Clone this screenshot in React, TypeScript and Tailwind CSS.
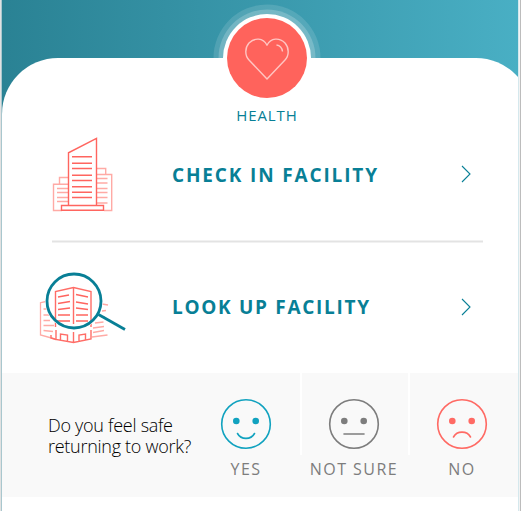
import type { ReactNode } from "react";

function HealthBadge() {
  return (
    <svg className="block h-[110px] w-[110px]" viewBox="-55 -55 110 110" fill="none">
      <circle r="53.500" fill="#fff" fillOpacity="0.13" />
      <circle r="48.500" fill="#fff" fillOpacity="0.2" />
      <circle r="44" fill="#fff" />
      <circle r="40" fill="#ff635c" />
      <path
        d="M0 21-18 2C-22.500-2.500-22-10.500-18-15-12.500-20.500-4-20.500 0-12.800 4-20.500 12.500-20.500 18-15 22-10.500 22.500-2.500 18 2Z"
        stroke="#ffc5c2"
        strokeWidth="1.4"
        strokeLinejoin="round"
      />
      <path d="M9.500-13C13-12.500 15-10 15.500-6.500" stroke="#ffc5c2" strokeWidth="1.4" />
    </svg>
  );
}

function BuildingIcon() {
  return (
    <svg className="block h-[100px] w-[100px]" viewBox="40 125 100 100" fill="none">
      <g stroke="#ffaaa5" strokeWidth="1.4">
        <path d="M68 184.300H53.500V210.500H62M59.500 184V177.500H68M97 174.500H111.700V210.500H104M97 168.500H105.700V174.500" />
        <path d="M57 188.500H68M57 192.500H68M57 197.500H68M57 201.500H68M97 178.500H107.500M97 183H107.500M97 188.500H107.500M97 192.500H107.500M97 197.500H107.500M97 203H107.500" />
      </g>
      <path d="M68.500 205V152.800L96.500 138.500V205M61.500 205.500H103.500V210.300H61.500Z" stroke="#ff655f" strokeWidth="1.4" />
      <path
        d="M72 156.700H92M72 163.300H92M72 168.500H92M72 175.300H92M72 180.500H92M72 186.700H92M72 192.300H92M72 197.500H92"
        stroke="#ff655f"
        strokeWidth="1.4"
      />
    </svg>
  );
}

function LookUpIcon() {
  return (
    <svg className="block h-[100px] w-[100px]" viewBox="30 260 100 100" fill="none">
      <g stroke="#ffaaa5" strokeWidth="1.3">
        <path d="M46 301.500 40.500 302.700V335L55 339M43.500 309H49M43.500 315H49M43.500 320.500H50M43.500 325.500H54M43.500 330.500 53 331.500M102 304 108 305M102 311 106 310.500M101 317H105M95 323 103.500 322M93 328 104 326.500M93 332.500 104 330.500M92 337 107.500 335" />
      </g>
      <path
        d="M55.500 327V291.500L73.500 287.500 91 291.500V327M73.500 287.500V324M56 330V339.500L73.500 342.500 91 339V330M73.500 332V342M60.500 340V334L67.500 335V341.500M79 341.500V335L85.500 334V339.500M51 335V338L56 339.500"
        stroke="#ff6d67"
        strokeWidth="1.4"
      />
      <path
        d="M58 297 69 295M58 303.500 70 301.500M58 309.500 70 308M58 315H70M57 321H70M76 294.500 88 297M76 302 88 304M76 308 88 309.500M76 315H88M76 321H88"
        stroke="#ff655f"
        strokeWidth="1.4"
      />
      <circle cx="74" cy="301" r="28.500" stroke="#fff" strokeWidth="1" />
      <circle cx="74" cy="301" r="27" stroke="#087f96" strokeWidth="2.8" />
      <path d="M98.500 314.500 125 329.500" stroke="#087f96" strokeWidth="2.8" />
    </svg>
  );
}

function Chevron() {
  return (
    <svg className="mt-[40px] ml-auto block h-[18px] w-[10px]" viewBox="0 0 10 18" fill="none">
      <path d="M1 1 9 9 1 17" stroke="#087f96" strokeWidth="1.1" />
    </svg>
  );
}

function Face({ color, mouth }: { color: string; mouth: string }) {
  return (
    <svg className="block h-[52px] w-[52px]" viewBox="-26 -26 52 52" fill="none">
      <circle r="24.300" stroke={color} strokeWidth="1.6" />
      <circle cx="-9.700" cy="-3" r="3.300" fill={color} />
      <circle cx="9.700" cy="-3" r="3.300" fill={color} />
      <path d={mouth} stroke={color} strokeWidth="1.6" strokeLinecap="round" />
    </svg>
  );
}

function Answer({ label, children }: { label: string; children: ReactNode }) {
  return (
    <button className="flex w-[106px] shrink-0 flex-col items-center pt-[25px] pr-[2px]">
      {children}
      <span className="mt-[7px] text-[16px] leading-6 tracking-[1.450px] whitespace-nowrap text-[#7d7d7d]">
        {label}
      </span>
    </button>
  );
}

export default function App() {
  return (
    <div className="flex h-[511px] w-[521px] overflow-hidden bg-white font-['Open_Sans','Noto_Sans',sans-serif]">
      <div className="w-px bg-[#e1e1e1]" />
      <div className="w-px bg-[#a9c7ce]" />
      <div className="flex h-full w-[516px] shrink-0 flex-col overflow-hidden bg-linear-to-r from-[#2a8294] to-[#49afc4] pt-[58px]">
        <main className="h-[453px] w-[530px] shrink-0 rounded-t-[56px] bg-white">
          <div className="mt-[-55px] flex flex-col items-center">
            <HealthBadge />
            <h1 className="mt-[-8px] text-[15px] leading-5 tracking-[0.900px] text-[#087f96]">HEALTH</h1>
          </div>
          <section className="flex h-[115px] w-[469px]">
            <div className="ml-[38px] w-[132px] shrink-0"><BuildingIcon /></div>
            <h2 className="mt-[36px] text-[19px] leading-7 font-bold tracking-[1.850px] whitespace-nowrap text-[#087f96]">
              CHECK IN FACILITY
            </h2>
            <Chevron />
          </section>
          <div className="ml-[50px] h-[3px] w-[431px] border-y border-[#f1f1f1] bg-[#e3e3e3]" />
          <section className="flex h-[130px] w-[469px] pt-[15px]">
            <div className="mt-[2px] ml-[28px] w-[142px] shrink-0"><LookUpIcon /></div>
            <h2 className="mt-[35px] text-[19px] leading-7 font-bold tracking-[1.700px] whitespace-nowrap text-[#087f96]">
              LOOK UP FACILITY
            </h2>
            <Chevron />
          </section>
          <section className="flex h-[124px] bg-[#f9f9f9]">
            <p className="w-[192px] shrink-0 pt-[42px] pl-[46px] text-[18px] leading-[21px] font-light tracking-[-0.280px] whitespace-nowrap text-black">
              Do you feel safe
              <br />
              returning to work?
            </p>
            <Answer label="YES"><Face color="#11a2bf" mouth="M-8.500 9.500C-5 16 5 16 8.500 9.500" /></Answer>
            <div className="h-[82px] w-[2px] bg-white" />
            <Answer label="NOT SURE"><Face color="#7d7d7d" mouth="M-10 10H10" /></Answer>
            <div className="h-[82px] w-[2px] bg-white" />
            <Answer label="NO"><Face color="#ff6a64" mouth="M-8.500 13C-5 6.500 5 6.500 8.500 13" /></Answer>
          </section>
        </main>
      </div>
      <div className="w-px bg-[#d5e8ed]" />
      <div className="w-px bg-[#f3f3f3]" />
      <div className="w-px bg-[#bcbcbc]" />
    </div>
  );
}
